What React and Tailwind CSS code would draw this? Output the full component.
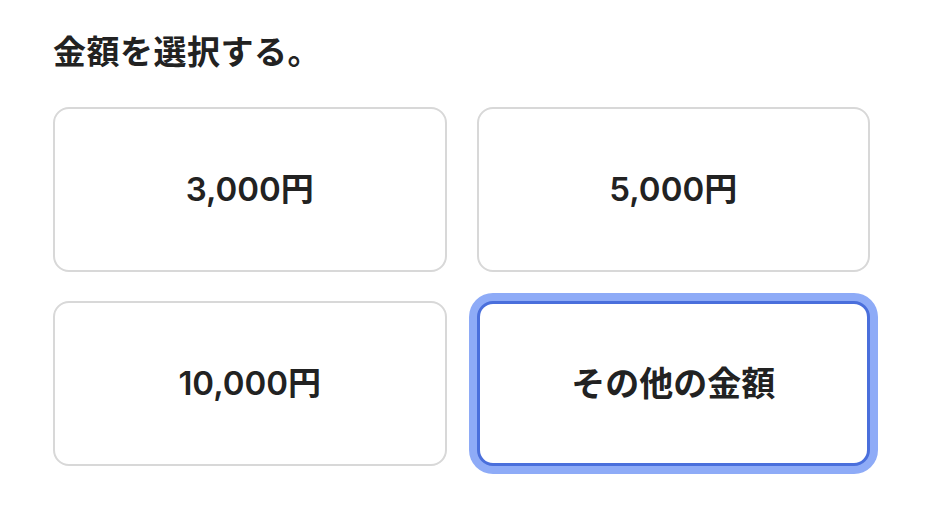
import React, { useState } from 'react';

const amounts = ['3,000円', '5,000円', '10,000円', 'その他の金額'];

const App = () => {
  const [selected, setSelected] = useState(3);

  return (
    <div
      className="w-[928px] h-[516px] bg-white px-[53px] pt-[28px] text-[#222222]"
      style={{ fontFamily: 'Inter, "Noto Sans CJK JP", "Noto Sans", sans-serif' }}
    >
      <h2 className="text-[33px] leading-[48px] font-bold tracking-[0.5px]">金額を選択する。</h2>

      {/* Amount options */}
      <div className="mt-[31px] w-[817px] grid grid-cols-2 gap-x-[30px] gap-y-[29px]">
        {amounts.map((label, i) => (
          <button
            key={label}
            onClick={() => setSelected(i)}
            className={
              i === selected
                ? 'h-[165px] rounded-[16px] bg-white border-[3px] border-[#4a6fdc] ring-[8px] ring-[#8eabf7] flex items-center justify-center text-[34px] font-bold'
                : 'h-[165px] rounded-[16px] bg-white border-2 border-[#d8d8d8] flex items-center justify-center text-[33px] font-semibold'
            }
          >
            {label}
          </button>
        ))}
      </div>
    </div>
  );
};

export default App;
